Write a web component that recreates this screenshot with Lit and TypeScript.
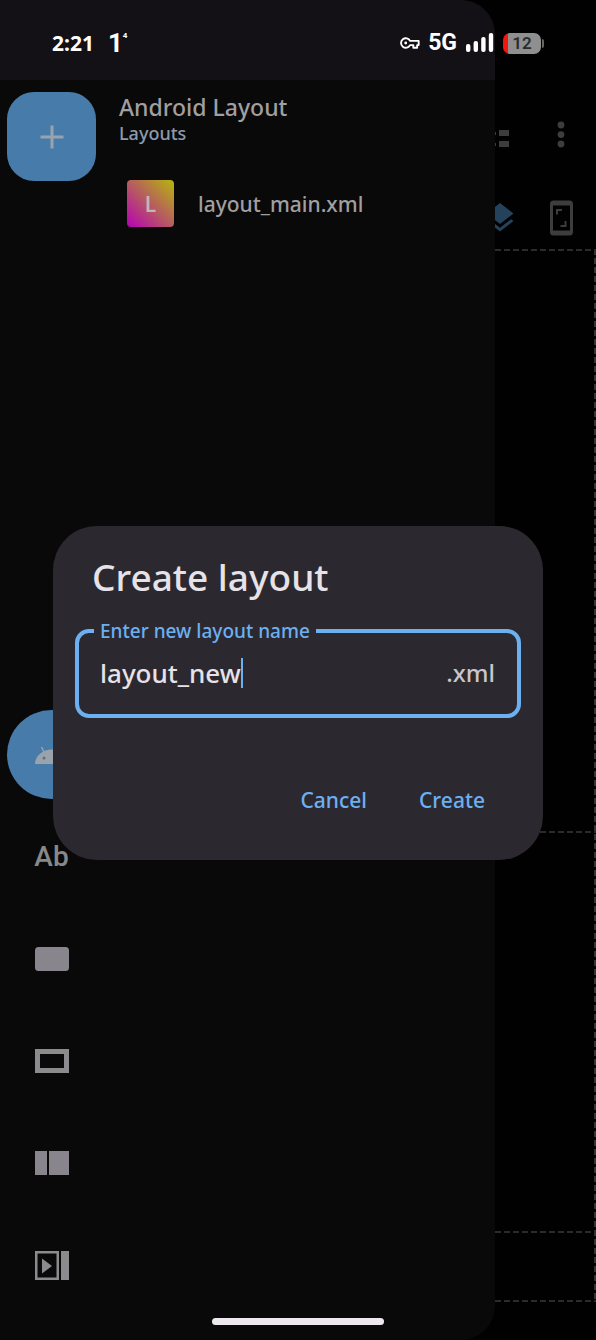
import { LitElement, html, css, svg } from "lit";
import { customElement, property, state } from "lit/decorators.js";

const base = css`
  :host {
    display: block;
    box-sizing: border-box;
    font-family: "Noto Sans", "Open Sans", sans-serif;
  }
  *,
  *::before,
  *::after {
    box-sizing: border-box;
  }
  button {
    font: inherit;
    color: inherit;
    background: none;
    border: 0;
    padding: 0;
    margin: 0;
    cursor: pointer;
  }
  svg {
    display: block;
  }
`;

@customElement("status-bar")
class StatusBar extends LitElement {
  @property() time = "2:21";
  @property({ type: Number }) battery = 12;

  static styles = [
    base,
    css`
      :host {
        height: 80px;
        padding: 6px 52px 0 52px;
        display: flex;
        align-items: center;
        color: #fff;
        font-family: Roboto, sans-serif;
        font-weight: 700;
        font-size: 23px;
        line-height: 28px;
      }
      .time {
        font-family: "Noto Sans", sans-serif;
        font-size: 21px;
      }
      .note {
        margin-left: 14px;
        display: flex;
        align-items: flex-start;
        font-size: 26px;
      }
      .note sup {
        font-size: 8px;
        line-height: 14px;
      }
      .right {
        margin-left: auto;
        display: flex;
        align-items: center;
      }
      .net {
        margin: 0 8px;
      }
      .battery {
        margin-left: 9px;
        width: 38px;
        height: 21px;
        border-radius: 7px;
        background: linear-gradient(90deg, #f5150f 5px, #8f8f8f 5px);
        color: #2c2c2c;
        font-size: 17px;
        font-weight: 600;
        line-height: 21px;
        text-align: center;
      }
      .tip {
        margin-left: 1px;
        width: 2px;
        height: 9px;
        border-radius: 0 2px 2px 0;
        background: #666;
      }
    `,
  ];

  render() {
    return html`
      <span class="time">${this.time}</span>
      <span class="note"><span>1</span><sup>4</sup></span>
      <div class="right">
        <svg width="20" height="14" viewBox="0 0 21 14" fill="none" stroke="#fff" stroke-width="2" stroke-linejoin="round">
          <path d="M10.6 4.8H19.6V9.2H18V12H14V9.2H10.6A5 5 0 1 1 10.6 4.8Z" />
          <circle cx="6" cy="7" r="1.5" fill="#fff" stroke="none" />
        </svg>
        <span class="net">5G</span>
        <svg width="29" height="20" viewBox="0 0 29 20" fill="#fff">
          <rect x="1" y="11" width="4.4" height="8" rx="2" />
          <rect x="8.6" y="8" width="4.4" height="11" rx="2" />
          <rect x="16.2" y="4" width="4.4" height="15" rx="2" />
          <rect x="23.8" y="0" width="4.4" height="19" rx="2" />
        </svg>
        <span class="battery">${this.battery}</span>
        <span class="tip"></span>
      </div>
    `;
  }
}

@customElement("editor-page")
class EditorPage extends LitElement {
  static styles = [
    base,
    css`
      :host {
        display: flex;
        flex-direction: column;
        padding: 80px 0 38px;
        background: #010101;
        color: #3d3d3d;
      }
      .row {
        display: flex;
        justify-content: flex-end;
        align-items: center;
        padding-right: 17px;
        height: 110px;
        gap: 34px;
      }
      .tools {
        height: 59px;
        padding-bottom: 4px;
        gap: 25px;
      }
      .blue {
        color: #25425c;
      }
      .canvas {
        flex: 1;
        display: grid;
        grid-template-rows: 581fr 399fr 71fr;
        background: repeating-linear-gradient(180deg, #333 0 6px, transparent 6px 9px) right top / 2px 100% no-repeat;
      }
      .pane {
        background: repeating-linear-gradient(90deg, #2b2b2b 0 6px, transparent 6px 9px) left top / 100% 2px no-repeat;
      }
      .pane:last-child {
        background:
          repeating-linear-gradient(90deg, #2b2b2b 0 6px, transparent 6px 9px) left top / 100% 2px no-repeat,
          repeating-linear-gradient(90deg, #2b2b2b 0 6px, transparent 6px 9px) left bottom / 100% 2px no-repeat;
      }
    `,
  ];

  render() {
    return html`
      <div class="row">
        <button aria-label="Component tree">
          <svg width="36" height="36" viewBox="0 0 36 36" fill="currentColor">
            <path d="M4 9h15v7H4zM26 13h10v6H26zM26 24h10v6H26zM12 16h3v11h-3zM12 15h11v3H12zM12 26h11v3H12z" />
          </svg>
        </button>
        <button aria-label="More options">
          <svg width="36" height="36" viewBox="0 0 36 36" fill="currentColor">
            <circle cx="18" cy="8" r="3.4" /><circle cx="18" cy="17.6" r="3.4" /><circle cx="18" cy="27" r="3.4" />
          </svg>
        </button>
      </div>
      <div class="row tools">
        <button class="blue" aria-label="Layers">
          <svg width="36" height="36" viewBox="0 0 24 24" fill="currentColor">
            <path
              d="M11.99 18.54l-7.37-5.73L3 14.07l9 7 9-7-1.63-1.27-7.38 5.74zM12 16l7.36-5.73L21 9l-9-7-9 7 1.63 1.27L12 16z"
            />
          </svg>
        </button>
        <button aria-label="Screen size">
          <svg width="36" height="36" viewBox="0 0 36 36" fill="none" stroke="currentColor">
            <path
              fill="currentColor"
              stroke="none"
              fill-rule="evenodd"
              d="M10.5 .5h16a3.5 3.5 0 0 1 3.5 3.5v28a3.5 3.5 0 0 1-3.5 3.5h-16A3.5 3.5 0 0 1 7 32V4A3.5 3.5 0 0 1 10.5 .5zM10 5.5v25h17v-25z"
            />
            <path stroke-width="2" d="M14 14.5V10H19M17.5 26H22.5V21" />
          </svg>
        </button>
      </div>
      <div class="canvas">
        <div class="pane"></div>
        <div class="pane"></div>
        <div class="pane"></div>
      </div>
    `;
  }
}

const railIcons = [
  {
    label: "Button",
    art: svg`<rect x="0" y="5" width="34" height="24" rx="3.5" fill="#88858d"/>`,
  },
  {
    label: "Frame",
    art: svg`<rect x="2.5" y="7.5" width="29" height="19" fill="none" stroke="#8b8b8d" stroke-width="5"/>`,
  },
  {
    label: "Columns",
    art: svg`<path fill="#88858d" d="M0 5h12v24H0zM14 5h20v24H14z"/>`,
  },
  {
    label: "Horizontal scroll",
    art: svg`<rect x="1.25" y="4.25" width="21.5" height="26.5" fill="none" stroke="#8b8b8d" stroke-width="2.5"/><path fill="#8b8b8d" d="M7 10.5v15l10-7.5zM26 3h8v29h-8z"/>`,
  },
];

@customElement("nav-drawer")
class NavDrawer extends LitElement {
  @property() heading = "Android Layout";
  @property({ type: Array }) files = ["layout_main.xml"];

  static styles = [
    base,
    css`
      :host {
        display: flex;
        flex-direction: column;
        background: #090909;
        border-radius: 0 34px 34px 0;
        overflow: hidden;
        color: #a09fa1;
      }
      .top {
        height: 80px;
        background: #131116;
      }
      .body {
        flex: 1;
        display: flex;
        gap: 23px;
        padding: 12px 7px 31px;
      }
      .rail {
        display: flex;
        flex-direction: column;
        gap: 13px;
        width: 89px;
      }
      .rail button {
        height: 89px;
        display: grid;
        place-items: center;
      }
      .rail .add {
        border-radius: 27px;
        background: #477ba9;
        margin-bottom: auto;
      }
      .rail .home {
        border-radius: 50%;
        background: #477ba9;
      }
      .rail .text {
        font-family: Roboto, sans-serif;
        font-size: 28px;
        font-weight: 500;
        color: #88888a;
      }
      .content {
        flex: 1;
      }
      h1 {
        margin: 0;
        font-size: 23px;
        line-height: 30px;
        font-weight: 500;
      }
      .sub {
        margin: 0;
        font-size: 18px;
        line-height: 22px;
        font-weight: 500;
        color: #8c9cab;
      }
      .file {
        display: flex;
        align-items: center;
        gap: 24px;
        margin: 36px 0 0 8px;
        font-size: 21px;
        line-height: 30px;
        font-weight: 500;
      }
      .tile {
        width: 47px;
        height: 47px;
        border-radius: 4px;
        display: grid;
        place-items: center;
        background: linear-gradient(45deg, #b700b4, #b65d5f 50%, #b7b70a);
        color: #c3b5b5;
        font-weight: 600;
      }
    `,
  ];

  render() {
    return html`
      <div class="top"></div>
      <div class="body">
        <nav class="rail">
          <button class="add" aria-label="Add layout">
            <svg width="24" height="24" viewBox="0 0 24 24" stroke="#97a3ae" stroke-width="3">
              <path d="M12 .5v23M.5 12h23" />
            </svg>
          </button>
          <button class="home" aria-label="Android widgets">
            <svg width="34" height="20" viewBox="0 0 34 20">
              <path d="M0 19a17 14.5 0 0 1 34 0z" fill="#9aa3ab" />
              <path d="M9.5 8L6.5 2M24.5 8L27.5 2" stroke="#9aa3ab" stroke-width="1.5" />
              <circle cx="9" cy="13" r="1.5" fill="#5b6f85" /><circle cx="25" cy="13" r="1.5" fill="#5b6f85" />
            </svg>
          </button>
          <button class="text">Ab</button>
          ${railIcons.map(
            (i) => html`<button aria-label=${i.label}><svg width="34" height="34" viewBox="0 0 34 34">${i.art}</svg></button>`,
          )}
        </nav>
        <section class="content">
          <h1>${this.heading}</h1>
          <p class="sub">Layouts</p>
          ${this.files.map((f) => html`<button class="file"><span class="tile">L</span><span>${f}</span></button>`)}
        </section>
      </div>
    `;
  }
}

@customElement("create-dialog")
class CreateDialog extends LitElement {
  @state() private name = "layout_new";

  static styles = [
    base,
    css`
      :host {
        background: #2b292f;
        border-radius: 44px;
        padding: 27px 22px 42px;
        color: #e7e2e8;
      }
      h2 {
        margin: 0 17px;
        font-size: 37px;
        line-height: 48px;
        font-weight: 500;
      }
      fieldset {
        margin: 17px 0 0;
        min-width: 0;
        height: 100px;
        border: 4px solid #6cb0f2;
        border-radius: 14px;
        padding: 0 22px 12px 21px;
        display: flex;
        align-items: center;
      }
      legend {
        margin-left: -6px;
        padding: 0 6px;
        font-size: 19px;
        line-height: 26px;
        font-weight: 500;
        color: #6cb0f2;
      }
      input {
        field-sizing: content;
        max-width: 80%;
        font: inherit;
        font-size: 26px;
        line-height: 32px;
        font-weight: 500;
        color: inherit;
        background: none;
        border: 0;
        outline: 0;
        padding: 0;
      }
      .caret {
        width: 2px;
        height: 30px;
        background: #6cb0f2;
      }
      .suffix {
        margin-left: auto;
        font-size: 24px;
        line-height: 32px;
        font-weight: 500;
        color: #c9c5cb;
      }
      .actions {
        display: flex;
        justify-content: flex-end;
        gap: 52px;
        padding-right: 36px;
        margin-top: 64px;
        font-size: 21px;
        line-height: 36px;
        font-weight: 500;
        color: #6cb0f2;
      }
    `,
  ];

  render() {
    return html`
      <h2>Create layout</h2>
      <fieldset>
        <legend><label for="name">Enter new layout name</label></legend>
        <input
          id="name"
          type="text"
          spellcheck="false"
          .value=${this.name}
          @input=${(e: Event) => (this.name = (e.target as HTMLInputElement).value)}
        />
        <span class="caret"></span>
        <span class="suffix">.xml</span>
      </fieldset>
      <div class="actions">
        <button>Cancel</button>
        <button>Create</button>
      </div>
    `;
  }
}

@customElement("app-root")
class AppRoot extends LitElement {
  static styles = [
    base,
    css`
      :host {
        display: grid;
        grid-template-columns: minmax(0, 1fr);
        min-height: 100vh;
        background: #010101;
      }
      editor-page,
      nav-drawer,
      create-dialog,
      status-bar,
      .home-bar {
        grid-area: 1 / 1;
      }
      nav-drawer {
        margin-right: 101px;
      }
      create-dialog {
        align-self: center;
        margin: 46px 53px 0;
      }
      status-bar {
        align-self: start;
      }
      .home-bar {
        align-self: end;
        justify-self: center;
        width: 172px;
        height: 7px;
        margin-bottom: 15px;
        border-radius: 4px;
        background: #ece8ee;
      }
    `,
  ];

  render() {
    return html`
      <editor-page></editor-page>
      <nav-drawer></nav-drawer>
      <create-dialog role="dialog" aria-label="Create layout"></create-dialog>
      <status-bar></status-bar>
      <div class="home-bar"></div>
    `;
  }
}
